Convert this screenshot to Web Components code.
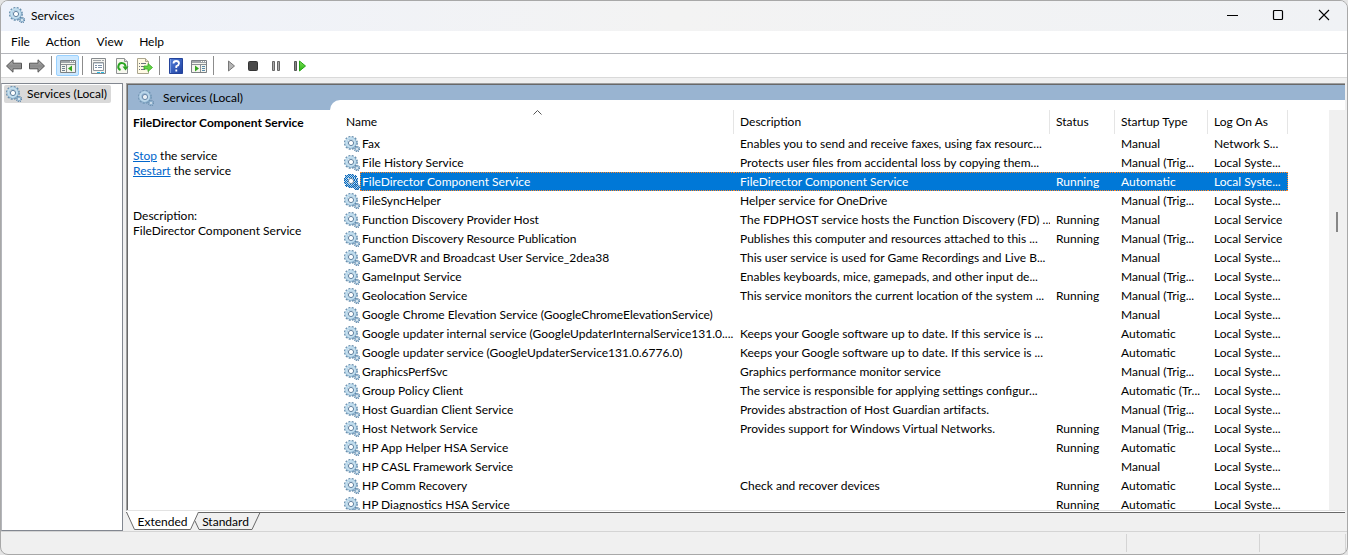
<!DOCTYPE html>
<html lang="en">
<head>
<meta charset="utf-8">
<title>Services</title>
<style>
html, body { margin: 0; height: 100%; background: #e4e4e4; }
body { font: 12px/15px "Segoe UI", Lato, "Open Sans", sans-serif; color: #000; }
</style>
</head>
<body>
<services-window></services-window>
<script>
const define = (name, html, setup) => {
  const template = document.createElement('template');
  template.innerHTML = html;
  customElements.define(name, class extends HTMLElement {
    connectedCallback() {
      if (this.shadowRoot) return;
      const root = this.attachShadow({ mode: 'open' });
      root.append(template.content.cloneNode(true));
      if (setup) setup(root, this);
    }
  });
};

/* Large and small cog used for every service */
define('gear-icon', `
<style>
:host { display: block; width: 16px; height: 16px; flex: none; }
svg { display: block; }
.dither { display: none; }
:host([selected]) .dither { display: block; }
:host([soft]) { opacity: .8; }
</style>
<svg width="16" height="16" viewBox="0 0 16 16" fill="none" aria-hidden="true">
  <circle cx="6.900" cy="6.900" r="6.200" stroke="#6a90ae" stroke-width="1.600" stroke-dasharray="1.950 1.300"/>
  <circle cx="6.900" cy="6.900" r="4.600" stroke="#7ca6c6" stroke-width="2.400"/>
  <circle cx="6.600" cy="6.500" r="4.300" stroke="#c3dfef" stroke-width="2.200"/>
  <circle cx="7" cy="7" r="2.600" fill="#fff" stroke="#5f81a0" stroke-width="1"/>
  <circle cx="13" cy="13" r="2.600" stroke="#5f84a5" stroke-width="1.200" stroke-dasharray="1.150 .892"/>
  <circle cx="13" cy="13" r="1.600" fill="#f3f8fb" stroke="#8cb0cc" stroke-width="1.300"/>
  <g class="dither" stroke="#0068c4" stroke-dasharray="1 1">
    <path d="M4 .5h6M1 1.500h12M2 2.500h11M1 3.500h12M0 4.500h4M9 4.500h5M1 5.500h3M10 5.500h4M0 6.500h4M10 6.500h4M1 7.500h3M11 7.500h3M0 8.500h4M10 8.500h4M1 9.500h4M9 9.500h5M2 10.500h12M1 11.500h14M2 12.500h14M5 13.500h11M10 14.500h6M11 15.500h4"/>
  </g>
</svg>`);

define('title-bar', `
<style>
:host { display: flex; align-items: center; height: 30px; padding-left: 8px; background: linear-gradient(90deg, #eef2fb, #f3f3f3 50%, #f0f2f5); }
span { margin-left: 6px; padding-bottom: 2px; flex: 1; }
gear-icon { margin-bottom: 2px; }
button { width: 46px; height: 28px; margin-bottom: 2px; border: 0; padding: 0; background: none; display: grid; place-items: center; }
svg { display: block; }
</style>
<gear-icon></gear-icon><span><slot></slot></span>
<button aria-label="Minimize"><svg width="12" height="12" fill="none" stroke="#000"><path d="M1 6.500h11"/></svg></button>
<button aria-label="Maximize"><svg width="12" height="12" fill="none" stroke="#000" stroke-width="1.200"><rect x="1.500" y="1.500" width="9" height="9" rx="1"/></svg></button>
<button aria-label="Close"><svg width="12" height="12" fill="none" stroke="#000" stroke-width="1.100"><path d="M1 1l10 10M11 1L1 11"/></svg></button>`);

define('menu-bar', `
<style>
:host { display: flex; height: 22px; padding-left: 2px; background: #fff; border-bottom: 1px solid #b4b6bb; }
button { font: inherit; color: inherit; border: 0; background: none; padding: 0 8px 2px; }
</style>
<button>File</button><button>Action</button><button>View</button><button>Help</button>`);

define('tool-bar', `
<style>
:host { display: flex; align-items: center; height: 23px; padding-left: 1px; background: #fff; border-bottom: 1px solid #d9d9d9; }
button { width: 23px; height: 21px; padding: 0; border: 0; background: none; display: grid; place-items: center; box-sizing: border-box; }
button[aria-pressed] { background: #cce8ff; border: 1px solid #99d1ff; border-radius: 2px; }
i { width: 1px; height: 19px; background: #8c8c8c; margin: 0 4px 0 3px; }
svg { display: block; }
</style>
<svg width="0" height="0" style="position:absolute" aria-hidden="true"><defs>
<linearGradient id="g" x2="0" y2="1"><stop stop-color="#b8b8b8"/><stop offset=".5" stop-color="#8a8a8a"/><stop offset="1" stop-color="#a9a9a9"/></linearGradient>
<linearGradient id="h" x2="1" y2="1"><stop stop-color="#5480dc"/><stop offset="1" stop-color="#1d3f9e"/></linearGradient>
<linearGradient id="n" x2="0" y2="1"><stop stop-color="#82e05a"/><stop offset="1" stop-color="#22b40e"/></linearGradient></defs></svg>
<button aria-label="Back"><svg width="18" height="16"><path d="M1.500 8L8 1.800v3.400h8.500v5.600H8v3.400z" fill="url(#g)" stroke="#555"/></svg></button>
<button aria-label="Forward"><svg width="18" height="16"><path d="M16.500 8L10 1.800v3.400H1.500v5.600H10v3.400z" fill="url(#g)" stroke="#555"/></svg></button>
<i></i>
<button aria-label="Show console tree" aria-pressed="true"><svg width="16" height="16"><path d="M.5 2.500h15v12H.5z" fill="#f5f5ee" stroke="#7b8084"/><path d="M1 3h14v2H1z" fill="#a0a5a8"/><path d="M10 3.500h1m1 0h1m1 0h1" stroke="#fff"/><path d="M1 6.500h14M6.500 7v7" stroke="#8c9194"/><path d="M2 8.500h3M2 10.500h3M2 12.500h3" stroke="#6f8190"/><path d="M12 7.500v6L8 10.500z" fill="#32a51e"/></svg></button>
<i></i>
<button aria-label="Properties"><svg width="16" height="16"><path d="M.5.5h14v15H.5z" fill="#f4f4f0" stroke="#85898d"/><path d="M2 2.500h8m1 0h2" stroke="#a1a6aa"/><path d="M2.500 4.500h10v8h-10z" fill="#fff" stroke="#90969b"/><path d="M3 5.500h9" stroke="#c9d3dc"/><path d="M4 7.500h2m1 0h4M4 9.500h2m1 0h4" stroke="#7b91a7"/><path d="M6 14.500h3m1 0h3" stroke="#24b9e6"/></svg></button>
<button aria-label="Refresh"><svg width="16" height="16"><path d="M2.500.5h8l3 3v12h-11z" fill="#f7f7ef" stroke="#8f9294"/><path d="M10.500.5v3h3" fill="#ddd" stroke="#999"/><path d="M6.500 12A3.600 3.600 0 1 1 11.500 8.800" fill="none" stroke="#2ba423" stroke-width="2"/><path d="M8.500 8.500h6l-3 4z" fill="#2ba423"/></svg></button>
<button aria-label="Export list"><svg width="17" height="16"><path d="M1.500.5h8l3 3v12h-11z" fill="#fffae4" stroke="#aaa58e"/><path d="M9.500.5v3h3" fill="#e8e0be" stroke="#aaa58e"/><path d="M3 5.500h1m1 0h5M3 8.500h1m1 0h3M3 11.500h1m1 0h4" stroke="#6b727e"/><path d="M8 8h4V5.500l4.500 4L12 13.500V11H8z" fill="#63d545" stroke="#39a823" stroke-width=".8"/></svg></button>
<i></i>
<button aria-label="Help topics"><svg width="14" height="16"><path d="M.5.5h13v15H.5z" fill="url(#h)" stroke="#24439a"/><path d="M1.500 1v14" stroke="#7d9ee2"/><path d="M4.500 5.500Q4.500 3 7.200 3T10 5.400Q10 7 7.300 8.300V10M7.300 11.500v2" fill="none" stroke="#fff" stroke-width="1.800"/></svg></button>
<button aria-label="Show action pane"><svg width="16" height="16"><path d="M.5 2.500h15v12H.5z" fill="#f5f5ee" stroke="#7b8084"/><path d="M1 3h14v2H1z" fill="#a0a5a8"/><path d="M10 3.500h1m1 0h1m1 0h1" stroke="#fff"/><path d="M1 6.500h14M9.500 7v7" stroke="#8c9194"/><path d="M11 8.500h3M11 10.500h3M11 12.500h3" stroke="#5589aa"/><path d="M4 7.500v6l4-3z" fill="#32a51e"/></svg></button>
<i></i>
<button aria-label="Start service"><svg width="14" height="14"><path d="M5.500 2v10l6-5z" fill="#b5b5b5" stroke="#777"/></svg></button>
<button aria-label="Stop service"><svg width="14" height="14"><rect x="2.500" y="2.500" width="9" height="9" rx="1" fill="#4a4a4a" stroke="#343434"/></svg></button>
<button aria-label="Pause service"><svg width="14" height="14" fill="#aaa" stroke="#666"><path d="M3.500 2.500h2v9h-2zM8.500 2.500h2v9h-2z"/></svg></button>
<button aria-label="Restart service"><svg width="14" height="14"><path d="M2.500 2.500h2v9h-2z" fill="#888" stroke="#555"/><path d="M7.500 2v10l6-5z" fill="url(#n)" stroke="#25a416"/></svg></button>`);

define('console-tree', `
<style>
:host { display: block; width: 120px; background: #fff; border: 1px solid #828790; border-left-color: #b4b6bb; }
a { display: flex; width: max-content; align-items: center; height: 18px; margin: 1px 0 0 2px; padding: 0 4px 0 2px; background: #d9d9d9; border-radius: 2px; color: inherit; text-decoration: none; white-space: nowrap; }
gear-icon { margin-right: 5px; }
span { padding-bottom: 2px; }
</style>
<a href="#"><gear-icon></gear-icon><span><slot></slot></span></a>`);

define('service-details', `
<style>
:host { display: flex; flex-direction: column; width: 202px; }
header { display: flex; align-items: center; height: 25px; padding-left: 10px; gap: 9px; }
section { flex: 1; background: #fff; padding: 5px 0 0 5px; white-space: nowrap; }
h1 { font: inherit; font-weight: 700; margin: 0 0 18px; }
p { margin: 0; }
.about { margin-top: 30px; }
a { color: #0066cc; }
</style>
<header><gear-icon soft></gear-icon>Services (Local)</header>
<section>
<h1>FileDirector Component Service</h1>
<p><a href="#">Stop</a> the service</p>
<p><a href="#">Restart</a> the service</p>
<p class="about">Description:</p>
<p>FileDirector Component Service</p>
</section>`);

const M = 'Manual', T = 'Manual (Trig...', A = 'Automatic', R = 'Running', S = 'Local Syste...', L = 'Local Service';
const services = [
  ['Fax', 'Enables you to send and receive faxes, using fax resourc...', '', M, 'Network S...'],
  ['File History Service', 'Protects user files from accidental loss by copying them...', '', T, S],
  ['FileDirector Component Service', 'FileDirector Component Service', R, A, S],
  ['FileSyncHelper', 'Helper service for OneDrive', '', T, S],
  ['Function Discovery Provider Host', 'The FDPHOST service hosts the Function Discovery (FD) ...', R, M, L],
  ['Function Discovery Resource Publication', 'Publishes this computer and resources attached to this ...', R, T, L],
  ['GameDVR and Broadcast User Service_2dea38', 'This user service is used for Game Recordings and Live B...', '', M, S],
  ['GameInput Service', 'Enables keyboards, mice, gamepads, and other input de...', '', T, S],
  ['Geolocation Service', 'This service monitors the current location of the system ...', R, T, S],
  ['Google Chrome Elevation Service (GoogleChromeElevationService)', '', '', M, S],
  ['Google updater internal service (GoogleUpdaterInternalService131.0....', 'Keeps your Google software up to date. If this service is ...', '', A, S],
  ['Google updater service (GoogleUpdaterService131.0.6776.0)', 'Keeps your Google software up to date. If this service is ...', '', A, S],
  ['GraphicsPerfSvc', 'Graphics performance monitor service', '', T, S],
  ['Group Policy Client', 'The service is responsible for applying settings configur...', '', 'Automatic (Tr...', S],
  ['Host Guardian Client Service', 'Provides abstraction of Host Guardian artifacts.', '', T, S],
  ['Host Network Service', 'Provides support for Windows Virtual Networks.', R, T, S],
  ['HP App Helper HSA Service', '', R, A, S],
  ['HP CASL Framework Service', '', '', M, S],
  ['HP Comm Recovery', 'Check and recover devices', R, A, S],
  ['HP Diagnostics HSA Service', '', R, A, S]
];

define('service-list', `
<style>
:host { display: flex; flex: 1; min-width: 0; min-height: 0; margin-top: 15px; padding-top: 10px; background: #fff; border-top-left-radius: 10px; overflow: hidden; }
.view { flex: 1; min-width: 0; overflow: hidden; padding-left: 10px; }
table { table-layout: fixed; border-collapse: separate; border-spacing: 0; width: 948px; }
th { position: relative; box-sizing: border-box; height: 24px; padding: 0 6px 2px; border-right: 1px solid #e5e5e5; font-weight: 400; text-align: left; }
th svg { position: absolute; left: 50%; top: 0; margin-left: -4px; }
td { height: 19px; padding: 0 0 0 6px; box-sizing: border-box; white-space: nowrap; overflow: hidden; line-height: 19px; }
td:first-child { padding-left: 4px; }
.name { display: flex; align-items: center; height: 19px; }
.name span { flex: 1; height: 19px; padding-left: 2px; box-sizing: border-box; }
.on td:not(:first-child), .on .name span {
  --dots: linear-gradient(90deg, #ff8728 1px, #0078d7 1px);
  background: var(--dots) left top / 2px 1px repeat-x, var(--dots) left bottom / 2px 1px repeat-x, #0078d7;
  color: #fff;
}
.on .name span { border-left: 1px dotted #ff8728; padding-left: 1px; }
.on td:last-child { border-right: 1px dotted #ff8728; }
.scroll { width: 16px; background: #f0f0f0; display: flex; flex-direction: column; align-items: center; }
.scroll::before { content: ""; flex: 102; }
.scroll b { width: 2px; flex: 20; background: #868686; }
.scroll::after { content: ""; flex: 278; }
</style>
<div class="view"><table>
<colgroup><col style="width:394px"><col style="width:316px"><col style="width:65px"><col style="width:93px"><col style="width:80px"></colgroup>
<thead><tr><th aria-sort="ascending">Name<svg width="9" height="6" fill="none" stroke="#555"><path d="M.5 4.500l4-4 4 4"/></svg></th><th>Description</th><th>Status</th><th>Startup Type</th><th>Log On As</th></tr></thead>
<tbody></tbody></table></div>
<div class="scroll"><b></b></div>`, root => {
  const body = root.querySelector('tbody');
  services.forEach((service, index) => {
    const row = body.insertRow();
    const selected = index === 2;
    if (selected) row.className = 'on';
    service.forEach((text, column) => {
      const cell = row.insertCell();
      if (column) { cell.textContent = text; return; }
      const name = document.createElement('div');
      name.className = 'name';
      const icon = document.createElement('gear-icon');
      icon.toggleAttribute('selected', selected);
      const label = document.createElement('span');
      label.textContent = text;
      name.append(icon, label);
      cell.append(name);
    });
  });
});

define('view-tabs', `
<style>
:host { display: flex; height: 20px; background: linear-gradient(#fff 1px, #696969 1px, #696969 2px, #f0f0f0 2px); }
button { position: relative; height: 20px; border: 0; padding: 0; background: none; font: inherit; color: inherit; }
button svg { position: absolute; left: 0; top: 0; }
button span { position: relative; }
.first { width: 73px; z-index: 1; }
.second { width: 67px; margin-left: -5px; padding-right: 4px; }
</style>
<button class="first"><svg width="73" height="20"><path d="M0 0h73l-8 19H9z" fill="#fff"/><path d="M.5 1l8 17.500h56L72.500 1" fill="none" stroke="#696969"/></svg><span>Extended</span></button>
<button class="second"><svg width="67" height="20"><path d="M1 10l4 8.500h53L66 1.500H5" fill="#f0f0f0" stroke="#696969"/></svg><span>Standard</span></button>`);

define('result-pane', `
<style>
:host { display: flex; flex-direction: column; flex: 1; min-width: 0; margin: 0 2px 0 3px; }
.frame { flex: 1; min-height: 0; display: flex; background: #99b4d1; border: solid #a0a0a0; border-width: 1px 0 0 1px; box-shadow: inset 1px 1px #696969; padding: 1px 0 0 1px; border-bottom: 1px solid #e3e3e3; overflow: hidden; }
</style>
<div class="frame"><service-details></service-details><service-list></service-list></div>
<view-tabs></view-tabs>`);

define('status-bar', `
<style>
:host { display: flex; height: 18px; padding: 2px 1px 2px 0; border-top: 1px solid #d4d4d4; }
span { border-right: 1px solid #d4d4d4; box-sizing: border-box; }
.message { flex: 1; }
.progress { width: 133px; }
.extra { width: 86px; }
</style>
<span class="message"></span><span class="progress"></span><span class="extra"></span>`);

define('services-window', `
<style>
:host { display: flex; flex-direction: column; box-sizing: border-box; height: 100vh; border: 1px solid #a8a8a8; border-radius: 8px; background: #f0f0f0; overflow: hidden; }
main { display: flex; flex: 1; min-height: 0; padding-top: 5px; }
</style>
<title-bar>Services</title-bar>
<menu-bar></menu-bar>
<tool-bar></tool-bar>
<main><console-tree>Services (Local)</console-tree><result-pane></result-pane></main>
<status-bar></status-bar>`);
</script>
</body>
</html>
